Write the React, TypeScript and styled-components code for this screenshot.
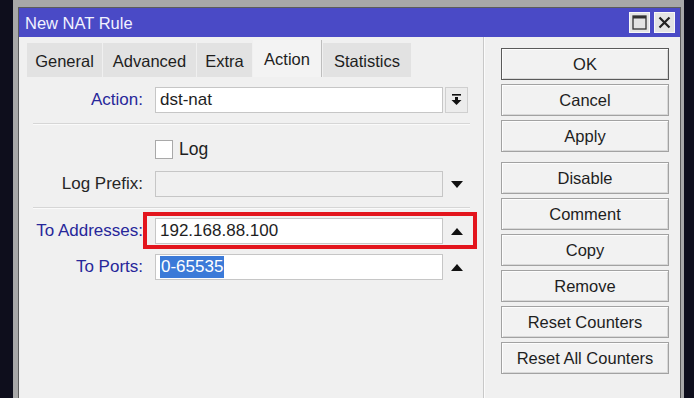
import styled, { createGlobalStyle } from "styled-components"

const GlobalStyle = createGlobalStyle`
  html, body {
    margin: 0;
    padding: 0;
    background: #0e0e1c;
  }
  body {
    font-family: "Liberation Sans", Arial, sans-serif;
  }
`

const Stage = styled.div`
  /* dark video backdrop round the window */
  display: flex;
  width: 694px;
  height: 398px;
  padding: 0 10px 0 13px;
  box-sizing: border-box;
  background: #0e0e1c;
  overflow: hidden;
`

const Frame = styled.div`
  flex: 1;
  display: flex;
  padding: 7px 3px 0 5px;
  background: #a8a8a8;
`

const Window = styled.div`
  flex: 1;
  display: flex;
  flex-direction: column;
  background: #f0f0f0;
  border: 1px solid #5c5c5c;
  border-bottom: none;
`

const TitleBar = styled.div`
  display: flex;
  align-items: center;
  height: 29px;
  padding: 0 5px 0 6px;
  background: #4a4ac6;
  color: #f2f2ff;
  font-size: 16.5px;
`

const TitleText = styled.div`
  flex: 1;
  padding-top: 2px;
`

const TitleButton = styled.div`
  display: flex;
  align-items: center;
  justify-content: center;
  width: 21px;
  height: 21px;
  margin-left: 4px;
  background: #e4e4e4;
  border: 1px solid #f8f8f8;
  box-sizing: border-box;
`

const Body = styled.div`
  flex: 1;
  display: flex;
`

const LeftPane = styled.div`
  width: 464px;
  display: flex;
  flex-direction: column;
  border-right: 1px solid #c8c8c8;
`

const TabBar = styled.div`
  display: flex;
  align-items: flex-end;
  padding: 3px 0 0 8px;
  height: 37px;
`

const Tab = styled.div<{ $w: number; $active?: boolean }>`
  display: flex;
  align-items: center;
  justify-content: center;
  width: ${(p) => p.$w}px;
  height: ${(p) => (p.$active ? 37 : 34)}px;
  margin-right: 1px;
  box-sizing: border-box;
  background: ${(p) => (p.$active ? "#f3f3f3" : "#e2e2e2")};
  border-right: ${(p) => (p.$active ? "1px solid #bdbdbd" : "none")};
  color: #1e1e1e;
  font-size: 16.5px;
  padding-top: ${(p) => (p.$active ? 1 : 3)}px;
`

const Form = styled.div`
  display: flex;
  flex-direction: column;
  padding-top: 10px;
`

const Row = styled.div<{ $top?: number }>`
  position: relative;
  display: flex;
  align-items: center;
  height: 26px;
  margin-top: ${(p) => p.$top ?? 0}px;
`

const Label = styled.div<{ $plain?: boolean }>`
  width: 136px;
  padding-right: 12px;
  box-sizing: border-box;
  text-align: right;
  font-size: 17px;
  color: ${(p) => (p.$plain ? "#262626" : "#27279a")};
  white-space: nowrap;
`

const Field = styled.div<{ $disabled?: boolean }>`
  display: flex;
  align-items: center;
  width: 288px;
  height: 26px;
  padding-left: 4px;
  box-sizing: border-box;
  background: ${(p) => (p.$disabled ? "#f0f0f0" : "#ffffff")};
  border: 1px solid #c6c6c6;
  font-size: 17px;
  color: #1e1e1e;
`

const Selected = styled.span`
  background: #3b7ad8;
  color: #ffffff;
  padding: 1px 1px;
`

const Side = styled.div`
  display: flex;
  align-items: center;
  justify-content: center;
  width: 27px;
  height: 26px;
  margin-left: 2px;
  padding-right: 4px;
  box-sizing: border-box;
`

const SideButton = styled.div`
  display: flex;
  align-items: center;
  justify-content: center;
  width: 23px;
  height: 26px;
  margin-left: 2px;
  box-sizing: border-box;
  background: #ececec;
  border: 1px solid #cfcfcf;
`

const Separator = styled.div<{ $top: number }>`
  margin: ${(p) => p.$top}px 0 0 14px;
  width: 437px;
  height: 1px;
  background: #d6d6d6;
  border-bottom: 1px solid #fafafa;
`

const CheckRow = styled.div`
  display: flex;
  align-items: center;
  height: 24px;
  margin-top: 12px;
  padding-left: 136px;
  font-size: 17.5px;
  color: #1e1e1e;
`

const CheckBox = styled.div`
  width: 18px;
  height: 19px;
  margin-right: 6px;
  box-sizing: border-box;
  background: #fff;
  border: 1px solid #a9a9a9;
`

const Highlight = styled.div`
  /* red annotation box drawn over the row */
  position: absolute;
  left: 124px;
  top: -6px;
  width: 334px;
  height: 37px;
  box-sizing: border-box;
  border: 4px solid #e3151d;
  pointer-events: none;
`

const RightPane = styled.div`
  display: flex;
  flex-direction: column;
  gap: 4px;
  padding: 11px 0 0 16px;
  border-left: 1px solid #fbfbfb;
`

const Button = styled.div<{ $default?: boolean; $top?: number }>`
  display: flex;
  align-items: center;
  justify-content: center;
  width: 168px;
  height: 32px;
  margin-top: ${(p) => p.$top ?? 0}px;
  padding-top: 1px;
  box-sizing: border-box;
  background: #f2f2f2;
  border: 1px solid ${(p) => (p.$default ? "#5a5a5a" : "#a2a2a2")};
  box-shadow: inset 1px 1px 0 #fdfdfd, inset -1px -1px 0 #d8d8d8;
  font-size: 16.5px;
  color: #1e1e1e;
`

const TriDown = () => (
  <svg width="12" height="7" viewBox="0 0 12 7">
    <path d="M0 0h12L6 7z" fill="#111" />
  </svg>
)

const TriUp = () => (
  <svg width="12" height="7" viewBox="0 0 12 7">
    <path d="M0 7h12L6 0z" fill="#111" />
  </svg>
)

const DropIcon = () => (
  <svg width="11" height="12" viewBox="0 0 11 12">
    <rect x="1" y="0" width="9" height="1.6" fill="#111" />
    <rect x="4" y="3" width="3" height="3" fill="#111" />
    <path d="M0.5 6h10L5.5 11z" fill="#111" />
  </svg>
)

const MaxIcon = () => (
  <svg width="15" height="15" viewBox="0 0 15 15">
    <rect x="1" y="1" width="13" height="13" fill="none" stroke="#333" strokeWidth="1.3" />
    <rect x="1" y="1" width="13" height="2.5" fill="#333" />
  </svg>
)

const CloseIcon = () => (
  <svg width="13" height="13" viewBox="0 0 13 13">
    <path d="M1.5 1.5l10 10M11.5 1.5l-10 10" stroke="#222" strokeWidth="2.2" />
  </svg>
)

const tabs: [string, number][] = [
  ["General", 75],
  ["Advanced", 93],
  ["Extra", 55],
  ["Action", 69],
  ["Statistics", 88],
]

const buttons = [
  "OK",
  "Cancel",
  "Apply",
  "Disable",
  "Comment",
  "Copy",
  "Remove",
  "Reset Counters",
  "Reset All Counters",
]

const App = () => {
  return (
    <>
      <GlobalStyle />
      <Stage>
        <Frame>
          <Window>
            <TitleBar>
              <TitleText>New NAT Rule</TitleText>
              <TitleButton>
                <MaxIcon />
              </TitleButton>
              <TitleButton>
                <CloseIcon />
              </TitleButton>
            </TitleBar>
            <Body>
              <LeftPane>
                <TabBar>
                  {tabs.map(([name, w]) => (
                    <Tab key={name} $w={w} $active={name === "Action"}>
                      {name}
                    </Tab>
                  ))}
                </TabBar>
                <Form>
                  <Row>
                    <Label>Action:</Label>
                    <Field>dst-nat</Field>
                    <SideButton>
                      <DropIcon />
                    </SideButton>
                  </Row>
                  <Separator $top={10} />
                  <CheckRow>
                    <CheckBox />
                    Log
                  </CheckRow>
                  <Row $top={10}>
                    <Label $plain>Log Prefix:</Label>
                    <Field $disabled />
                    <Side>
                      <TriDown />
                    </Side>
                  </Row>
                  <Separator $top={10} />
                  <Row $top={9}>
                    <Label>To Addresses:</Label>
                    <Field>192.168.88.100</Field>
                    <Side>
                      <TriUp />
                    </Side>
                    <Highlight />
                  </Row>
                  <Row $top={10}>
                    <Label>To Ports:</Label>
                    <Field>
                      <Selected>0-65535</Selected>
                    </Field>
                    <Side>
                      <TriUp />
                    </Side>
                  </Row>
                </Form>
              </LeftPane>
              <RightPane>
                {buttons.map((b) => (
                  <Button key={b} $default={b === "OK"} $top={b === "Disable" ? 6 : 0}>
                    {b}
                  </Button>
                ))}
              </RightPane>
            </Body>
          </Window>
        </Frame>
      </Stage>
    </>
  )
}

export default App
